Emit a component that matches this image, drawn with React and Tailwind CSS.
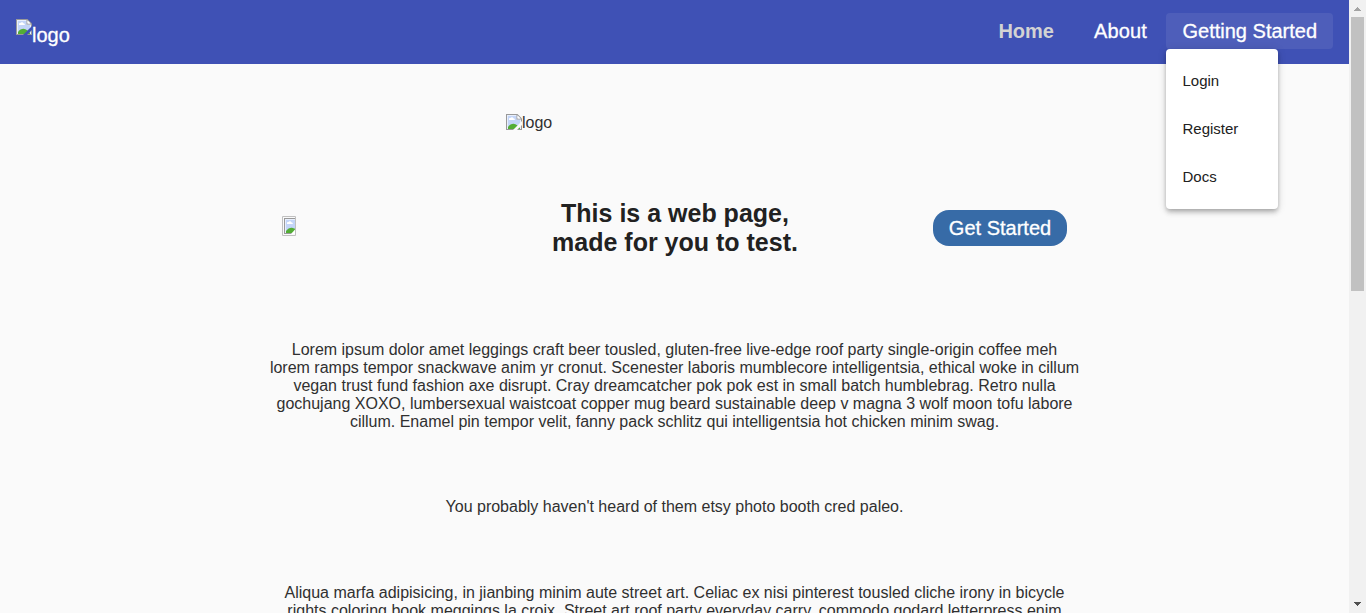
function BrokenImage({ cut = "#fafafa" }) {
  return (
    <svg className="block h-4 w-4 shrink-0" viewBox="0 0 16 16">
      <path d="M0 0h11.5L16 4.500V16H0z" fill="#999" />
      <path d="M1 1h10l4 4v10H1z" fill="#e8effc" />
      <path d="M2 2h8.500v3.500H14V15H2z" fill="#c3d5f8" />
      <path d="M10.500 1v4.500H15v-1h-3.500V1z" fill="#999" />
      <path d="M11.500 1.500v3h3z" fill="#fff" />
      <path d="M3 6V5c0-.8.7-1.200 1.400-1C5 3 7 3 7.300 4.300 8.300 4.200 9 5 8.800 6z" fill="#fff" />
      <path d="M2 15v-2C3.500 10.700 5.500 9.700 7.500 9.700c2.500.2 5 2.300 6.500 4.300v1z" fill="#53ad35" />
      <path d="M16 7v4L11 16H7z" fill={cut} />
    </svg>
  );
}

function Scrollbar() {
  return (
    <div className="flex h-full w-[17px] shrink-0 flex-col bg-[#f1f1f1]">
      <svg className="block h-[17px] w-[17px]" viewBox="0 0 17 17" shapeRendering="crispEdges">
        <path d="M8 7h1v1h1v1h1v1h1v1H5v-1h1V9h1V8h1z" fill="#a3a3a3" />
      </svg>
      <div className="mx-[2px] h-[274px] w-[13px] bg-[#c1c1c1]" />
      <svg className="mt-auto block h-[17px] w-[17px]" viewBox="0 0 17 17" shapeRendering="crispEdges">
        <path d="M5 6h7v1h-1v1h-1v1H9v1H8V9H7V8H6V7H5z" fill="#505050" />
      </svg>
    </div>
  );
}

const intro = [
  "Lorem ipsum dolor amet leggings craft beer tousled, gluten-free live-edge roof party single-origin coffee meh",
  "lorem ramps tempor snackwave anim yr cronut. Scenester laboris mumblecore intelligentsia, ethical woke in cillum",
  "vegan trust fund fashion axe disrupt. Cray dreamcatcher pok pok est in small batch humblebrag. Retro nulla",
  "gochujang XOXO, lumbersexual waistcoat copper mug beard sustainable deep v magna 3 wolf moon tofu labore",
  "cillum. Enamel pin tempor velit, fanny pack schlitz qui intelligentsia hot chicken minim swag.",
];
const more = [
  "Aliqua marfa adipisicing, in jianbing minim aute street art. Celiac ex nisi pinterest tousled cliche irony in bicycle",
  "rights coloring book meggings la croix. Street art roof party everyday carry, commodo godard letterpress enim",
];

function Paragraph({ lines }) {
  return (
    <p>
      {lines.map((line) => (
        <span key={line} className="block whitespace-nowrap">{line}</span>
      ))}
    </p>
  );
}

export default function App() {
  return (
    <div className="flex h-[613px] w-[1366px] overflow-hidden bg-[#fafafa] font-['Liberation_Sans',Arial,sans-serif] text-[#212121]">
      <div className="flex min-w-0 flex-1 flex-col">
        <header className="flex h-16 shrink-0 items-start justify-between bg-[#3f51b5] px-4 text-xl leading-9 text-white">
          <div className="flex pt-[19px] [-webkit-text-stroke:0.3px_white]">
            <BrokenImage cut="#3f51b5" />
            <span className="leading-8">logo</span>
          </div>
          <nav className="flex pt-[13px]">
            <a className="mr-2 px-4 font-bold text-[#d3d3d3]">Home</a>
            <a className="mr-[3px] px-4 tracking-[0.0075em] [-webkit-text-stroke:0.3px_white]">About</a>
            <div className="relative w-[167px] rounded bg-white/8 pl-[16.5px] whitespace-nowrap">
              <span className="[-webkit-text-stroke:0.3px_white]">Getting Started</span>
              <div className="absolute top-9 left-0 h-40 w-28 rounded bg-white py-2 text-[15px] leading-[48px] text-[#212121] shadow-[0_2px_4px_-1px_rgba(0,0,0,0.2),0_4px_5px_0_rgba(0,0,0,0.14),0_1px_10px_0_rgba(0,0,0,0.12)]">
                <a className="block pl-[16.5px]">Login</a>
                <a className="block pl-[16.5px]">Register</a>
                <a className="block pl-[16.5px]">Docs</a>
              </div>
            </div>
          </nav>
        </header>
        <main className="flex flex-col">
          <div className="mt-[50px] ml-[506px] flex h-[18px] text-base leading-[18px] text-[#303030]">
            <BrokenImage />
            <span>logo</span>
          </div>
          <section className="mt-[66px] ml-[282px] grid h-[60px] w-[785px] grid-cols-[14px_1fr_134px] items-start">
            <svg className="mt-[18px] block h-5 w-[14px]" viewBox="0 0 14 20">
              <path d="M.5.5h13v19H.5z" fill="#fafafa" stroke="#c0c0c0" />
              <path d="M2 2h11v16H2z" fill="#999" />
              <path d="M3 3h10v14H3z" fill="#e8effc" />
              <path d="M4 4h9v13H4z" fill="#c3d5f8" />
              <path d="M5 8V7c0-.8.700-1.200 1.400-1C7 5 9 5 9.300 6.300c1 0 1.700.8 1.500 1.700z" fill="#fff" />
              <path d="M4 17v-2c1.500-2.300 4-3.500 6-3.300l3 1V17z" fill="#53ad35" />
              <path d="M13 13.500V18H9z" fill="#fff" />
            </svg>
            <h1 className="pt-px pr-px pl-[122px] text-center text-[25px] leading-[29px] font-bold whitespace-nowrap">
              <span className="block">This is a web page,</span>
              <span className="block">made for you to test.</span>
            </h1>
            <button className="mt-3 h-9 w-[134px] rounded-2xl bg-[#376ba7] text-xl leading-9 text-white [-webkit-text-stroke:0.3px_white]">Get Started</button>
          </section>
          <div className="mx-auto mt-[83px] flex w-[810px] flex-col items-center text-center text-base leading-[18px] text-[#303030]">
            <Paragraph lines={intro} />
            <div className="mt-[67px] mb-[68px]">
              <Paragraph lines={["You probably haven't heard of them etsy photo booth cred paleo."]} />
            </div>
            <Paragraph lines={more} />
          </div>
        </main>
      </div>
      <Scrollbar />
    </div>
  );
}
